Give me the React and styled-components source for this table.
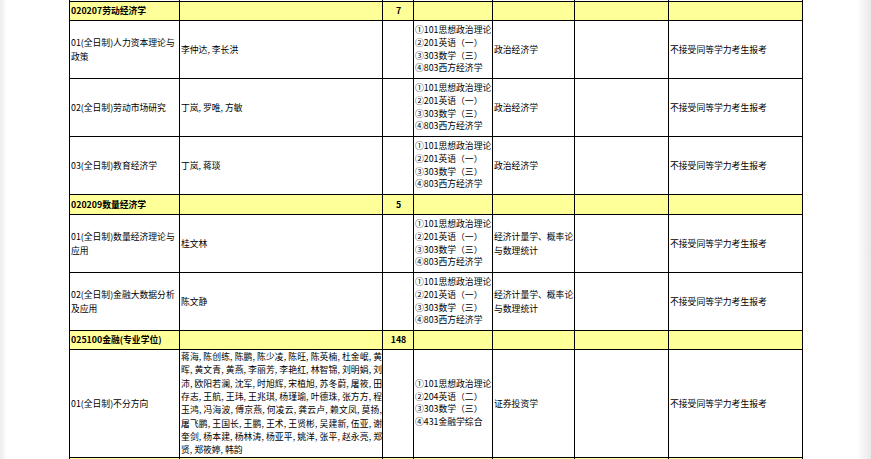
import React from 'react';
import styled, { createGlobalStyle } from 'styled-components';

const GlobalStyle = createGlobalStyle`
  html, body {
    margin: 0;
    padding: 0;
    background: #fff;
    overflow: hidden;
  }
  body {
    font-family: "Noto Sans CJK SC", "Noto Sans", sans-serif;
  }
`;

const Viewer = styled.div`
  width: 871px;
  height: 459px;
  overflow: hidden;
  box-sizing: border-box;
  padding-left: 69px;
  background: linear-gradient(
    to right,
    #ececec 0,
    #fff 7px,
    #fff 857px,
    #e8e8e8 871px
  );
`;

const Sheet = styled.table`
  border-collapse: collapse;
  table-layout: fixed;
  width: 734px;
  font-family: "Noto Sans CJK SC", "Noto Sans", sans-serif;
  font-size: 8.8px;
  color: #000;
  background: #fff;
`;

const Row = styled.tr`
  height: ${(p) => p.$h}px;
  background: ${(p) => (p.$band ? '#ffff99' : '#fff')};
  font-weight: ${(p) => (p.$band ? 700 : 400)};
`;

const Cell = styled.td`
  border: 1px solid #000;
  padding: 0 0 0 1px;
  vertical-align: middle;
  text-align: ${(p) => p.$align || 'left'};
  line-height: 13.6px;
  overflow: hidden;
`;

const StubCell = styled.td`
  border: 1px solid #000;
  border-top: none;
  padding: 0;
  height: 1px;
`;

const ExamLine = styled.div`
  line-height: 12.8px;
  white-space: nowrap;
`;

const NameLine = styled.div`
  line-height: 13.35px;
  white-space: nowrap;
  text-align: justify;
  text-align-last: ${(p) => (p.$last ? 'left' : 'justify')};
`;

const widths = [110, 203, 31, 79, 82, 94, 134];

const examA = ['①101思想政治理论', '②201英语（一）', '③303数学（三）', '④803西方经济学'];
const examB = ['①101思想政治理论', '②204英语（二）', '③303数学（三）', '④431金融学综合'];

const financeTeachers = [
  '蒋海, 陈创练, 陈鹏, 陈少凌, 陈旺, 陈英楠, 杜金岷, 黄',
  '晖, 黄文青, 黄燕, 李丽芳, 李艳红, 林智锦, 刘明娟, 刘',
  '沛, 欧阳若澜, 沈军, 时旭辉, 宋植旭, 苏冬蔚, 屠筱, 田',
  '存志, 王航, 王玮, 王兆琪, 杨瑾瑜, 叶德珠, 张方方, 程',
  '玉鸿, 冯海波, 傅京燕, 何凌云, 龚云卢, 赖文凤, 莫扬,',
  '屠飞鹏, 王国长, 王鹏, 王术, 王贤彬, 吴建新, 伍亚, 谢',
  '奎剑, 杨本建, 杨林涛, 杨亚平, 姚洋, 张平, 赵永亮, 郑',
  '贤, 郑筱婷, 韩韵',
];

const rows = [
  { band: true, h: 19, name: '020207劳动经济学', count: '7' },
  { h: 58, name: '01(全日制)人力资本理论与政策', teachers: '李仲达, 李长洪', exam: examA, retest: '政治经济学' },
  { h: 58, name: '02(全日制)劳动市场研究', teachers: '丁岚, 罗唯, 方敏', exam: examA, retest: '政治经济学' },
  { h: 58, name: '03(全日制)教育经济学', teachers: '丁岚, 蒋琰', exam: examA, retest: '政治经济学' },
  { band: true, h: 20, name: '020209数量经济学', count: '5' },
  { h: 58, name: '01(全日制)数量经济理论与应用', teachers: '桂文林', exam: examA, retest: '经济计量学、概率论与数理统计' },
  { h: 58, name: '02(全日制)金融大数据分析及应用', teachers: '陈文静', exam: examA, retest: '经济计量学、概率论与数理统计' },
  { band: true, h: 19, name: '025100金融(专业学位)', count: '148' },
  { h: 107, name: '01(全日制)不分方向', teacherLines: financeTeachers, exam: examB, retest: '证券投资学' },
  { band: true, h: 19, name: '', count: '' },
];

const Teachers = ({ row }) => {
  if (row.teacherLines) {
    return row.teacherLines.map((line, i) => (
      <NameLine key={i} $last={i === row.teacherLines.length - 1}>
        {line}
      </NameLine>
    ));
  }
  return row.teachers || null;
};

export default function App() {
  return (
    <>
      <GlobalStyle />
      <Viewer>
        <Sheet>
          <colgroup>
            {widths.map((w, i) => (
              <col key={i} style={{ width: w }} />
            ))}
          </colgroup>
          <tbody>
            <tr>
              {widths.map((w, i) => (
                <StubCell key={i} />
              ))}
            </tr>
            {rows.map((row, i) =>
              row.band ? (
                <Row key={i} $band $h={row.h}>
                  <Cell>{row.name}</Cell>
                  <Cell />
                  <Cell $align="center">{row.count}</Cell>
                  <Cell />
                  <Cell />
                  <Cell />
                  <Cell />
                </Row>
              ) : (
                <Row key={i} $h={row.h}>
                  <Cell>{row.name}</Cell>
                  <Cell>
                    <Teachers row={row} />
                  </Cell>
                  <Cell />
                  <Cell>
                    {row.exam.map((e) => (
                      <ExamLine key={e}>{e}</ExamLine>
                    ))}
                  </Cell>
                  <Cell>{row.retest}</Cell>
                  <Cell />
                  <Cell>不接受同等学力考生报考</Cell>
                </Row>
              )
            )}
          </tbody>
        </Sheet>
      </Viewer>
    </>
  );
}
